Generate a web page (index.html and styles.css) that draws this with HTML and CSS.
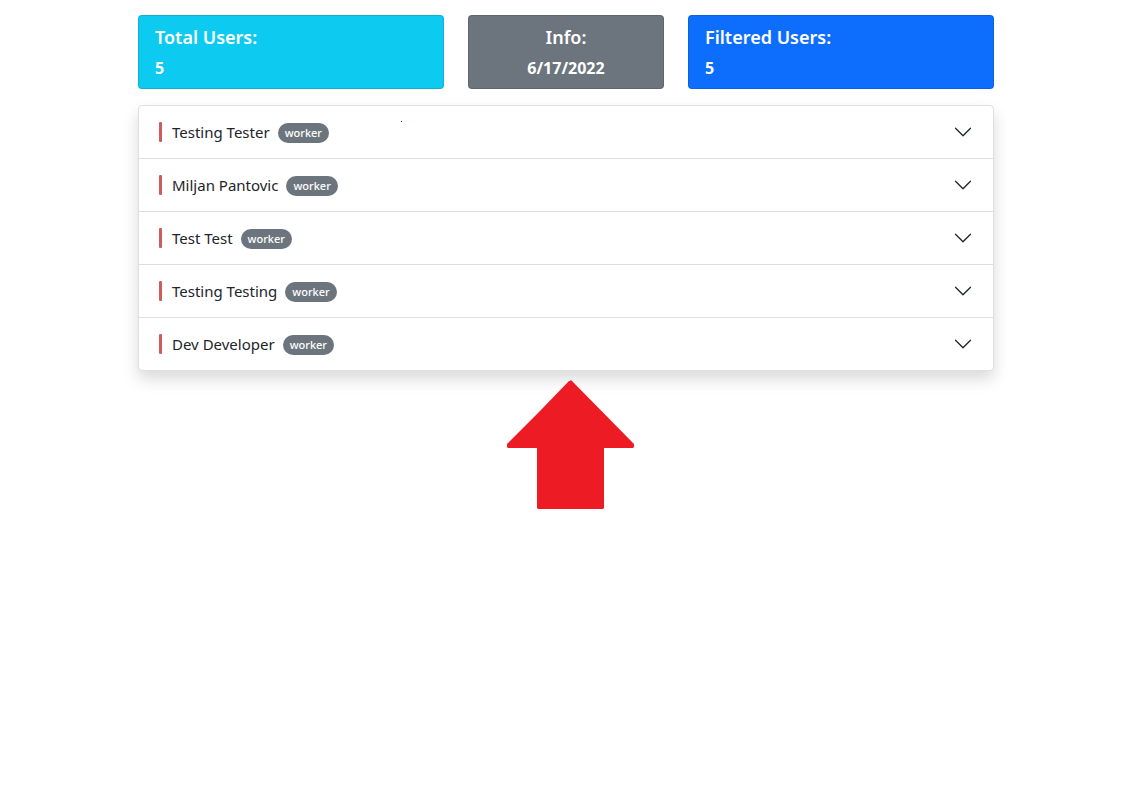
FILE: index.html
```html
<!DOCTYPE html>
<html lang="en">
<head>
<meta charset="utf-8">
<meta name="viewport" content="width=device-width, initial-scale=1">
<title>Users</title>
<link rel="stylesheet" href="styles.css">
</head>
<body>
<main class="page">
  <section class="stats">
    <article class="card card-total"><h2 class="card-title">Total Users:</h2><p class="card-value">5</p></article>
    <article class="card card-info"><h2 class="card-title">Info:</h2><p class="card-value">6/17/2022</p></article>
    <article class="card card-filtered"><h2 class="card-title">Filtered Users:</h2><p class="card-value">5</p></article>
  </section>
  <section class="users">
    <button class="user" type="button" aria-expanded="false"><span class="bar"></span><span class="name">Testing Tester</span><span class="badge">worker</span><svg class="chevron" viewBox="0 0 16 16" aria-hidden="true"><path d="M1.646 4.646a.5.5 0 0 1 .708 0L8 10.293l5.646-5.647a.5.5 0 0 1 .708.708l-6 6a.5.5 0 0 1-.708 0l-6-6a.5.5 0 0 1 0-.708z"/></svg></button>
    <button class="user" type="button" aria-expanded="false"><span class="bar"></span><span class="name">Miljan Pantovic</span><span class="badge">worker</span><svg class="chevron" viewBox="0 0 16 16" aria-hidden="true"><path d="M1.646 4.646a.5.5 0 0 1 .708 0L8 10.293l5.646-5.647a.5.5 0 0 1 .708.708l-6 6a.5.5 0 0 1-.708 0l-6-6a.5.5 0 0 1 0-.708z"/></svg></button>
    <button class="user" type="button" aria-expanded="false"><span class="bar"></span><span class="name">Test Test</span><span class="badge">worker</span><svg class="chevron" viewBox="0 0 16 16" aria-hidden="true"><path d="M1.646 4.646a.5.5 0 0 1 .708 0L8 10.293l5.646-5.647a.5.5 0 0 1 .708.708l-6 6a.5.5 0 0 1-.708 0l-6-6a.5.5 0 0 1 0-.708z"/></svg></button>
    <button class="user" type="button" aria-expanded="false"><span class="bar"></span><span class="name">Testing Testing</span><span class="badge">worker</span><svg class="chevron" viewBox="0 0 16 16" aria-hidden="true"><path d="M1.646 4.646a.5.5 0 0 1 .708 0L8 10.293l5.646-5.647a.5.5 0 0 1 .708.708l-6 6a.5.5 0 0 1-.708 0l-6-6a.5.5 0 0 1 0-.708z"/></svg></button>
    <button class="user" type="button" aria-expanded="false"><span class="bar"></span><span class="name">Dev Developer</span><span class="badge">worker</span><svg class="chevron" viewBox="0 0 16 16" aria-hidden="true"><path d="M1.646 4.646a.5.5 0 0 1 .708 0L8 10.293l5.646-5.647a.5.5 0 0 1 .708.708l-6 6a.5.5 0 0 1-.708 0l-6-6a.5.5 0 0 1 0-.708z"/></svg></button>
    <span class="speck"></span>
  </section>
  <div class="pointer">
    <svg class="arrow" viewBox="0 0 127 129" aria-hidden="true"><path d="M62 1h1l1-1 1 1 62 63v3l-1 1H97v60l-1 1H31l-1-1V68H1l-1-1v-3L31 33z"/></svg>
  </div>
</main>
</body>
</html>
```
FILE: styles.css
```css
* { box-sizing: border-box; }

body {
  margin: 0;
  padding: 15px 24px 24px 26px;
  background: #fff;
  color: #212529;
  font-family: "Segoe UI", "Noto Sans", "Open Sans", sans-serif;
  font-size: 15px;
  line-height: 24px;
}

.page {
  max-width: 856px;
  margin: 0 auto;
}

.stats {
  display: grid;
  grid-template-columns: 3fr minmax(150px, 196px) 3fr;
  gap: 24px;
  margin-bottom: 16px;
}

.card {
  padding: 9px 16px;
  border: 1px solid rgba(0, 0, 0, 0.125);
  border-radius: 4px;
  color: #fff;
}

.card-total { background: #0dcaf0; }
.card-info { background: #6c757d; text-align: center; }
.card-filtered { background: #0d6efd; }

.card-title {
  margin: 0 0 8px;
  font-size: 18px;
  font-weight: 600;
  line-height: 24px;
}

.card-value {
  margin: 0;
  font-size: 16px;
  font-weight: 700;
  line-height: 22px;
}

.users {
  position: relative;
  border: 1px solid #dfdfdf;
  border-radius: 4px;
  background: #fff;
  box-shadow: 0 8px 16px rgba(0, 0, 0, 0.15);
}

.user {
  display: flex;
  align-items: center;
  width: 100%;
  height: 53px;
  padding: 0 20px;
  border: 0;
  border-bottom: 1px solid #dfdfdf;
  background: none;
  color: inherit;
  font: inherit;
  text-align: left;
}

.user:last-of-type {
  height: 52px;
  border-bottom: 0;
}

.bar {
  width: 3px;
  height: 20px;
  margin-right: 10px;
  border-radius: 1px;
  background: #cd5c5c;
}

.badge {
  height: 20px;
  margin-top: 2px;
  margin-left: 8px;
  padding: 0 7px;
  border-radius: 10px;
  background: #6c757d;
  color: #fff;
  font-size: 11px;
  font-weight: 500;
  line-height: 20px;
}

.chevron {
  width: 20px;
  height: 20px;
  margin-left: auto;
  fill: #212529;
}

.speck {
  position: absolute;
  top: 15px;
  left: 262px;
  width: 1px;
  height: 1px;
  background: #a02026;
}

.pointer {
  display: flex;
  justify-content: center;
  padding: 9px 0 0 9px;
}

.arrow {
  position: relative;
  width: 127px;
  height: 129px;
  fill: #ed1c24;
}
```
